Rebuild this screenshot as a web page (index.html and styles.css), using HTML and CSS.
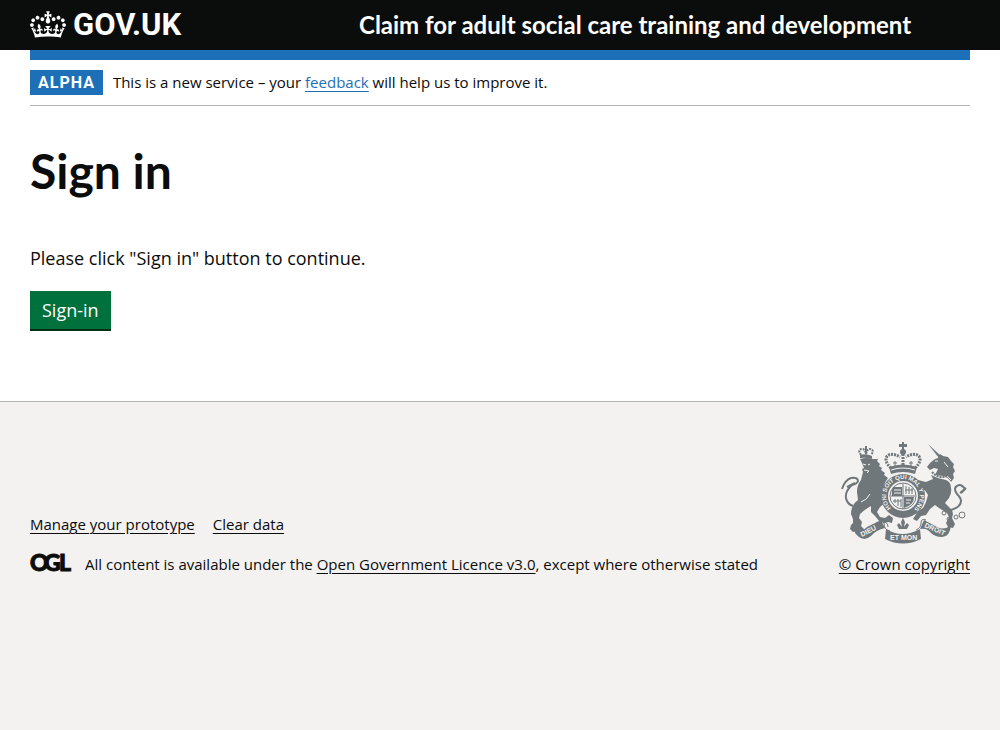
FILE: index.html
```html
<!DOCTYPE html>
<html lang="en">
<head>
<meta charset="utf-8">
<meta name="viewport" content="width=device-width, initial-scale=1">
<title>Sign in - Claim for adult social care training and development</title>
<link rel="stylesheet" href="styles.css">
</head>
<body>
<header class="header">
  <div class="container header-row">
    <a class="brand" href="#">
      <svg class="crown" viewBox="0 0 132 97" width="36" height="27" aria-hidden="true"><path fill="currentColor" d="M25 30.2c3.5 1.5 7.7-.2 9.1-3.7 1.5-3.6-.2-7.8-3.9-9.2-3.6-1.4-7.6.3-9.1 3.9-1.4 3.5.3 7.5 3.9 9zM9 39.5c3.6 1.5 7.8-.2 9.2-3.7 1.5-3.6-.2-7.8-3.9-9.1-3.6-1.5-7.6.2-9.1 3.8-1.4 3.5.3 7.5 3.8 9zM4.4 57.2c3.5 1.5 7.7-.2 9.1-3.8 1.5-3.6-.2-7.7-3.9-9.1-3.5-1.5-7.6.3-9.1 3.8-1.4 3.5.3 7.6 3.9 9.1zm38.3-21.4c3.5 1.5 7.7-.2 9.1-3.8 1.5-3.6-.2-7.7-3.9-9.1-3.6-1.5-7.6.3-9.1 3.8-1.3 3.6.4 7.7 3.9 9.1zm64.4-5.6c-3.6 1.5-7.8-.2-9.1-3.7-1.5-3.6.2-7.8 3.8-9.2 3.6-1.4 7.7.3 9.2 3.9 1.3 3.5-.4 7.5-3.9 9zm15.9 9.3c-3.6 1.5-7.7-.2-9.1-3.7-1.5-3.6.2-7.8 3.7-9.1 3.6-1.5 7.7.2 9.2 3.8 1.5 3.5-.3 7.5-3.8 9zm4.7 17.7c-3.6 1.5-7.8-.2-9.2-3.8-1.5-3.6.2-7.7 3.9-9.1 3.6-1.5 7.7.3 9.2 3.8 1.3 3.5-.4 7.6-3.9 9.1zM89.3 35.8c-3.6 1.5-7.8-.2-9.2-3.8-1.4-3.6.2-7.7 3.9-9.1 3.6-1.5 7.7.3 9.2 3.8 1.4 3.6-.3 7.7-3.9 9.1zM69.7 17.7l8.9 4.7V9.3l-8.9 2.8c-.2-.3-.5-.6-.9-.9L72.4 0H59.6l3.5 11.2c-.3.3-.6.5-.9.9l-8.8-2.8v13.1l8.8-4.7c.3.3.6.7.9.9l-5 15.4v.1c-.2.8-.4 1.6-.4 2.4 0 4.1 3.1 7.5 7 8.1h.2c.3 0 .7.1 1 .1.4 0 .7 0 1-.1h.2c4-.6 7.1-4.1 7.1-8.1 0-.8-.1-1.7-.4-2.4V34l-5.1-15.4c.4-.2.7-.6 1-.9zM66 92.8c16.9 0 32.8 1.1 47.1 3.2 4-16.9 8.9-26.7 14-33.5l-9.6-3.4c1 4.9 1.1 7.2 0 10.2-1.5-1.4-3-4.3-4.2-8.7L108.6 76c2.8-2 5-3.2 7.5-3.3-4.4 9.4-10 11.9-13.6 11.2-4.3-.8-6.3-4.6-5.6-7.9 1-4.7 5.7-5.9 8-.5 4.3-8.7-3-11.4-7.6-8.8 7.1-7.2 7.9-13.5 2.1-21.1-8 6.1-8.1 12.3-4.5 20.8-4.7-5.4-12.1-2.5-9.5 6.2 3.4-5.2 7.9-2 7.2 3.1-.6 4.3-6.4 7.8-13.5 7.2-10.3-.9-10.9-8-11.2-13.8 2.5-.5 7.1 1.8 11 7.3L80.2 60c-4.1 4.4-8 5.3-12.3 5.4 1.4-4.4 8-11.6 8-11.6H55.5s6.4 7.2 7.9 11.6c-4.2-.1-8-1-12.3-5.4l1.4 16.4c3.9-5.5 8.5-7.7 10.9-7.3-.3 5.8-.9 12.8-11.1 13.8-7.2.6-12.9-2.9-13.5-7.2-.7-5 3.8-8.3 7.1-3.1 2.7-8.7-4.6-11.6-9.4-6.2 3.7-8.5 3.6-14.7-4.6-20.8-5.8 7.6-5 13.9 2.2 21.1-4.7-2.6-11.9.1-7.7 8.8 2.3-5.5 7.1-4.2 8.1.5.7 3.3-1.3 7.1-5.7 7.9-3.5.7-9-1.8-13.5-11.2 2.5.1 4.7 1.3 7.5 3.3l-4.7-15.4c-1.2 4.4-2.7 7.2-4.3 8.7-1.1-3-.9-5.3 0-10.2l-9.5 3.4c5 6.9 9.9 16.7 14 33.5 14.8-2.1 30.8-3.2 47.7-3.2z"/></svg>
      <span>GOV.UK</span>
    </a>
    <a class="service-name" href="#">Claim for adult social care training and development</a>
  </div>
</header>

<div class="container">
  <div class="blue-bar"></div>
  <div class="phase-banner">
    <strong class="tag">ALPHA</strong>
    <span class="phase-text">This is a new service – your <a class="link" href="#">feedback</a> will help us to improve it.</span>
  </div>
  <main class="main">
    <h1 class="heading">Sign in</h1>
    <p class="body-text">Please click "Sign in" button to continue.</p>
    <button class="button" type="button">Sign-in</button>
  </main>
</div>

<footer class="footer">
  <div class="container footer-row">
    <div class="footer-meta">
      <ul class="footer-links">
        <li><a class="footer-link" href="#">Manage your prototype</a></li>
        <li><a class="footer-link" href="#">Clear data</a></li>
      </ul>
      <div class="licence">
        <svg class="ogl" viewBox="0 0 41 20" width="41" height="20" role="img" aria-label="Open Government Licence"><text class="ogl-text" x="0 14 29" y="16">OGL</text></svg>
        <span>All content is available under the <a class="footer-link" href="#">Open Government Licence v3.0</a>, except where otherwise stated</span>
      </div>
    </div>
    <a class="copyright" href="#">
      <svg class="arms" viewBox="0 0 125 102" width="125" height="102" aria-hidden="true">
        <!-- lion's crown -->
        <path class="beads-small" d="M19 13q-4-6 1-6 3 0 4 5 1-5 4-5 5 1 1 6"/>
        <g class="ink">
          <path d="M18 13q6-2 12 1v3q-6-2-12-1zM23 4h2v8h-2z"/>
          <!-- lion -->
          <path d="M18 17q7-2 13 0l5 0-1 2 3 3-1 2 3 2-1 2 4 3-1 2 4 3q-4 5-5 12v6l3 6-6 5-3 5 3 5 5 1 4-3 4 3-1 5-4-1-3 1-5-1-5-6-4-4 0-6q-7 4-11 8l-1 4 3 4-1 4 3 3-2 4-4-2-5 1-3-3 1-4 2-2 0-4-2-5q0-9 7-14l-1-8q0-7 4-12l1-4 1-4-1-3 2-1-2-5z"/>
          <path d="M38 56l8-1 2 3-7 5-5-1z"/>
          <!-- unicorn -->
          <path d="M86 2l14 13-3 1z"/>
          <path d="M98 12l3 2 5 1 3 4 3 3-1 3 2 4-2 3 1 4-3 4q-3-5-8-6l-8-1 3-6-4-1-4 2-3-3 3-4 5-4 3-1z"/>
          <path d="M89 33q7 4 15 5 5 2 5 8 1 5-2 10l-4 5 7 7 1 4-1 4 3 6-2 4-5-1-2-4 3-6-2-4-8-5-4-3-5 4-4 6-5 1-4 5-4-2 5-8 5-3 3-6 2-7q-3-6-6-6l-6 2-3-4 5 0-4-5-5 0-1-4 5-1 5 3 8 2 7-3z"/>
          <!-- crown over the garter -->
          <path d="M60 0h2v2h3v3h-3v4h-2V5h-3V2h3zM47 25q14-5 28 0l-2 7q-12-4-24 0z"/>
          <circle cx="61" cy="10" r="3"/>
        </g>
        <path class="cut" d="M21 22l3 1M28 22l-2 1M22 28l5 1-2 2M28 52q-3 6-9 8M93 19l3 0M102 20l4 5M105 34l4 4M49 28q12-4 24 0"/>
        <path class="beads-small" d="M90 30q6 7 15 4"/>
        <g class="line">
          <path d="M0 47q3-9 9-11 7-1 7 3-1 3-6 4-7 6-6 13 1 6 7 8M109 68q10-3 10-9 0-3-4-7-4-6 0-8 4-3 8 3l-4 4M13 41l-8 4M124 46l-6 5"/>
          <path class="beads" d="M49 26C38 16 47 8 58 15M73 26C84 16 75 8 64 15M61 12v13"/>
          <path class="fine" d="M53 25v-6M51 21h4M69 25v-6M67 21h4"/>
          <path class="fine" d="M97 62q6 0 6 7"/>
        </g>
        <g class="fine">
          <circle cx="102" cy="71" r="2"/><circle cx="107" cy="77" r="2"/><circle cx="114" cy="75" r="2"/><circle cx="120" cy="73" r="3"/>
        </g>
        <!-- garter and quartered shield -->
        <circle class="garter" cx="61" cy="54" r="22"/>
        <circle class="field" cx="61" cy="54" r="15"/>
        <circle class="fine" cx="61" cy="54" r="13"/>
        <path class="shield" d="M51 45h9v9h-10q-1-5 1-9zM62 55h10q0 8-10 11z"/>
        <path class="fine" d="M61 42v25M49 54h24M64 44v8M67 45v7M70 46v6M63 48h8M53 57v4M56 57v7M59 57v8M51 59h8"/>
        <path class="cut" d="M52 48h7M52 51h7M64 58h5M64 61h4"/>
        <path id="garter-curve" fill="none" d="M49 66a17 17 0 1 1 24 0"/>
        <text class="motto"><textPath href="#garter-curve">HONI SOIT QUI MAL Y PENSE</textPath></text>
        <!-- ribbon with motto -->
        <g class="ink">
          <path d="M13 86q7 5 12-1l14-7 4 8q-9 2-14 8-8 7-16-3zM82 78l13 7q7 4 14-2-1 12-9 12-8 0-13-6-3-3-9-2zM44 87q16 10 34 0l1 10q-18 9-36 0z"/>
          <path d="M61 76l2 4-1 5 3-4 2 2-2 4h-8l-2-4 2-2 3 4-1-5z"/>
        </g>
        <path class="fine" d="M37 79q5-3 5 2 0 7 6 8M41 80q5 0 5 5M84 78q-5-2-5 3 0 5-5 7"/>
        <g class="ribbon-text">
          <text x="20" y="95" transform="rotate(-28 20 95)">DIEU</text>
          <text x="48" y="98">ET MON</text>
          <text x="82" y="85" transform="rotate(24 82 85)">DROIT</text>
        </g>
      </svg>
      <span class="copyright-text">© Crown copyright</span>
    </a>
  </div>
</footer>
</body>
</html>
```
FILE: styles.css
```css
* { box-sizing: border-box; }

html { background: #f3f2f1; }

body {
  margin: 0;
  background: #fff;
  color: #0b0c0c;
  font-family: "Open Sans", sans-serif;
  font-size: 18px;
  line-height: 25px;
}

.container {
  max-width: 960px;
  margin: 0 30px;
}

.header { background: #0b0c0c; color: #fff; }

.header-row {
  display: grid;
  grid-template-columns: 35% 1fr;
  align-items: center;
  min-height: 50px;
  padding-bottom: 2px;
}

.brand {
  display: flex;
  align-items: center;
  gap: 7px;
  color: #fff;
  font-family: Roboto, sans-serif;
  font-size: 31px;
  font-weight: 700;
  text-decoration: none;
}

.service-name {
  color: #fff;
  font-family: Lato, sans-serif;
  font-size: 24px;
  font-weight: 700;
  text-decoration: none;
}

.blue-bar { height: 10px; background: #1d70b8; }

.phase-banner {
  display: flex;
  align-items: center;
  gap: 10px;
  padding: 10px 0;
  border-bottom: 1px solid #b1b4b6;
  font-size: 15px;
}

.tag {
  padding: 0 8px;
  background: #1d70b8;
  color: #fff;
  font-family: Roboto, sans-serif;
  font-size: 16px;
  letter-spacing: 1px;
}

.link {
  color: #1d70b8;
  text-underline-offset: 3px;
}

.main { padding: 40px 0 70px; }

.heading {
  margin: 0 0 50px;
  font-family: Lato, sans-serif;
  font-size: 48px;
  font-weight: 700;
  line-height: 50px;
}

.body-text { margin: 0 0 20px; }

.button {
  display: block;
  padding: 7px 12px 6px;
  border: 0;
  border-bottom: 2px solid #002d18;
  background: #00703c;
  color: #fff;
  font: inherit;
  cursor: pointer;
}

.footer {
  padding: 40px 0 25px;
  border-top: 1px solid #b1b4b6;
  background: #f3f2f1;
  font-size: 15px;
}

.footer-row {
  display: flex;
  align-items: flex-end;
  justify-content: space-between;
}

.footer-links {
  display: flex;
  gap: 18px;
  margin: 0 0 15px;
  padding: 0;
  list-style: none;
}

.licence { display: flex; align-items: center; gap: 14px; }

.ogl { overflow: visible; }

.ogl-text {
  font: 900 23px Lato, sans-serif;
  fill: #0b0c0c;
  stroke: #0b0c0c;
  stroke-width: 1;
}

.footer-link,
.copyright { color: #0b0c0c; text-underline-offset: 3px; }

.copyright {
  display: flex;
  flex-direction: column;
  align-items: flex-end;
  gap: 8px;
  text-decoration: none;
}

.copyright-text { text-decoration: underline; text-underline-offset: 3px; }

.arms { margin-right: 3px; overflow: visible; }
.ink,
.garter,
.shield { fill: #6f777b; }
.line { fill: none; stroke: #6f777b; stroke-width: 2; }
.beads { stroke-width: 3; stroke-dasharray: 2 1; }
.beads-small { fill: none; stroke: #6f777b; stroke-width: 2; stroke-dasharray: 2 1; }
.field { fill: #f3f2f1; }
.fine { fill: none; stroke: #6f777b; stroke-width: 1; }
.cut { fill: none; stroke: #f3f2f1; stroke-width: 1; }
.motto { font: 700 6px "Liberation Sans", sans-serif; fill: #f3f2f1; }
.ribbon-text { font: 700 7px "Liberation Sans", sans-serif; fill: #f3f2f1; }
```
